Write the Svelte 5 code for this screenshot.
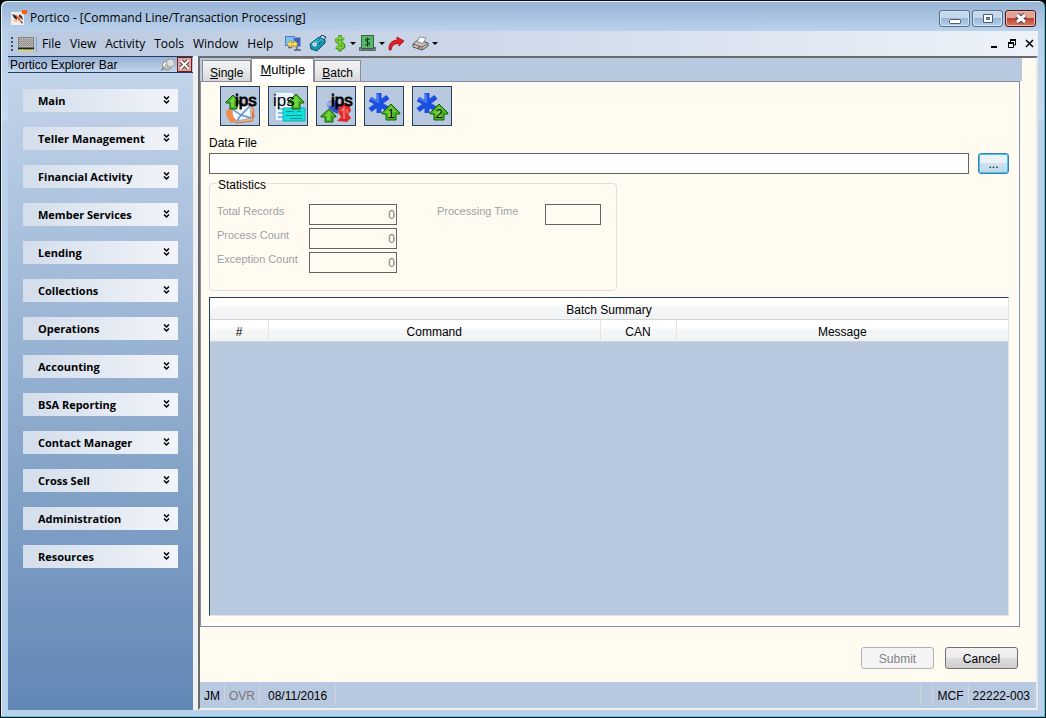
<script lang="ts">
  const menus = ['File', 'View', 'Activity', 'Tools', 'Window', 'Help'];
  const groups = [
    'Main', 'Teller Management', 'Financial Activity', 'Member Services', 'Lending',
    'Collections', 'Operations', 'Accounting', 'BSA Reporting', 'Contact Manager',
    'Cross Sell', 'Administration', 'Resources'
  ];
  const stats = [
    { id: 'total', label: 'Total Records' },
    { id: 'process', label: 'Process Count' },
    { id: 'exception', label: 'Exception Count' }
  ];
  let dataFile = $state('');
</script>

{#snippet arrow(x: number, y: number, digit: string)}
  <g transform="translate({x} {y})">
    <path d="M9 0 L18 9 V10 H14 V16 H4 V10 H0 V9 Z" fill="#45b51f" stroke="#17610c" />
    <path d="M9 2 L14 8 H11 V14 H6 V9 H3 Z" fill="#8be04b" opacity=".65" />
    <text class="digit" x="9" y="14" text-anchor="middle">{digit}</text>
  </g>
{/snippet}

{#snippet star()}
  <path d="M14 6 V26 M5 12 L23 22 M23 10 L5 23" stroke="#1b4fe0" stroke-width="5" />
  <path d="M13 7 V16 M6 11 L13 15" stroke="#4b7df5" stroke-width="2" />
{/snippet}

<div class="window">
  <header class="title">
    <svg width="16" height="16" viewBox="0 0 16 16" aria-hidden="true">
      <path d="M0 2H13V15H0Z" fill="#f1eeec" />
      <path d="M1 4L6 6L6 10L3 8Z" fill="#2b2b30" /><path d="M4 4L8 7L12 13L7 10Z" fill="#ef6a25" />
      <path d="M8 4L11 6L12 10L8 7Z" fill="#3b3b40" /><path d="M2 11L5 9L7 12Z" fill="#f6b08c" /><path d="M9 11L12 12L11 14Z" fill="#5b5b60" />
      <rect x="11" width="5" height="4" fill="#ff5a0a" />
    </svg>
    <h1>Portico - [Command Line/Transaction Processing]</h1>
    <div class="controls">
      <button class="wbtn" aria-label="Minimize"><svg width="12" height="12"><rect x=".5" y="6.500" width="11" height="4" rx="1" fill="#fff" stroke="#4c5d75" /></svg></button>
      <button class="wbtn" aria-label="Maximize"><svg width="12" height="12"><path d="M1.500 1.500H10.500V9.500H1.500Z" fill="#fff" stroke="#4c5d75" /><path d="M4.500 4.500H7.500V6.500H4.500Z" fill="#86a6cc" stroke="#4c5d75" /></svg></button>
      <button class="wbtn close" aria-label="Close"><svg width="12" height="12"><path d="M2 2L10 9M10 2L2 9" stroke="#4a3f4e" stroke-width="5" /><path d="M2 2L10 9M10 2L2 9" stroke="#fff" stroke-width="3" /></svg></button>
    </div>
  </header>

  <nav class="menubar">
    <span class="grip"></span>
    <svg width="17" height="16" viewBox="0 0 17 16" aria-hidden="true">
      <rect x=".5" y="1.500" width="15" height="11" fill="#b5b4b1" stroke="#85847f" />
      <path d="M1 3.500H15M1 5.500H15M1 7.500H15M1 9.500H15" stroke="#8c8b88" stroke-dasharray="1 1" />
      <path d="M2 4.500H15M2 6.500H15M2 8.500H15" stroke="#98979a" stroke-dasharray="1 1" />
      <path d="M0 12.500H16" stroke="#222" stroke-width="2" /><path d="M1 14.500H16" stroke="#e4d833" stroke-width="2" stroke-dasharray="2 1" />
    </svg>
    <span class="bar"></span>
    {#each menus as m}<button class="menu">{m}</button>{/each}
    <div class="tools">
      <button aria-label="Connect">
        <svg width="17" height="17" viewBox="0 0 17 17"><rect x=".5" y="1.500" width="9" height="9" fill="#7cc0f5" stroke="#4a7fc0" /><rect x="8.500" y="2.500" width="7" height="9" fill="#3a60c8" stroke="#8fa3c8" /><path d="M9 15H16M3 12.500H7M12 12V15" stroke="#55607a" stroke-width="1.500" /><path d="M2 9L6 5.500V8H9V5.500L13 9L9 12.500V10.500H6V12.500Z" fill="#ffe24a" stroke="#b8940e" stroke-width=".6" /></svg>
      </button>
      <button aria-label="Calculator">
        <svg width="18" height="17" viewBox="0 0 18 17"><path d="M1 9L10 2L16 5V8L8 16L2 14Z" fill="#1592b4" stroke="#075873" /><path d="M2 9L10 3L15 5L7 12Z" fill="#35bcd4" /><circle cx="5.500" cy="9.500" r="2" fill="#e5fbff" /><circle cx="5.500" cy="9.500" r=".8" fill="#e05a90" /><path d="M9 6L11 4M10 8L13 6M8 10L11 8" stroke="#054a66" /><path d="M11 2L13 0L17 2L15 5" fill="none" stroke="#0a3e58" /></svg>
      </button>
      <button aria-label="Money">
        <svg width="13" height="17" viewBox="0 0 13 17"><path d="M10 4.500Q6 2 3 4.500Q2 7 6 8Q10.500 9 9.500 12Q6 14.500 2 12M6 0V16.500" fill="none" stroke="#4d9524" stroke-width="3.500" /><path d="M10 4Q6 1.500 3 4Q2 7 6 8Q10 9 9 12Q6 14 2 11.500M6 1V15" fill="none" stroke="#7fd63c" stroke-width="1.500" /></svg>
      </button>
      <i class="drop"></i>
      <button aria-label="Cash">
        <svg width="17" height="17" viewBox="0 0 17 17"><rect x="2.500" y=".5" width="12" height="13" fill="#5db46c" stroke="#2b7040" /><path d="M11 4.500Q8.500 3 6.500 4.500Q6.500 6.500 8.500 7Q11 7.500 10.500 9.500Q8.500 11 6 9.500M8.500 2.500V11.500" fill="none" stroke="#063c17" /><path d="M.5 12.500H2.500V14H14.500V12.500H16.500V15.500H.5Z" fill="#8a8d92" stroke="#444" stroke-width=".7" /></svg>
      </button>
      <i class="drop"></i>
      <button aria-label="Forward">
        <svg width="17" height="15" viewBox="0 0 17 15"><path d="M1 14Q0 5 9 4V1L16 5L11 10V7.500Q4 7 3 14Z" fill="#e61d22" stroke="#a20a10" stroke-width=".8" /></svg>
      </button>
      <button aria-label="Print">
        <svg width="17" height="15" viewBox="0 0 17 15"><path d="M1 8L6 4L16 7V10L10 14L1 11Z" fill="#c6c5c0" stroke="#55534e" /><path d="M5 5.500L8 .8L14 2L11 7.500Z" fill="#fff" stroke="#77746f" stroke-width=".8" /><path d="M1 8L10 11L16 7.500M10 11V13" fill="none" stroke="#67645f" /><path d="M6 11.500H8" stroke="#e03030" stroke-width="2" /></svg>
      </button>
      <i class="drop"></i>
    </div>
    <div class="mdi">
      <button aria-label="Minimize document"><svg width="10" height="10"><path d="M2 8H8" stroke="#000" stroke-width="2" /></svg></button>
      <button aria-label="Restore document"><svg width="10" height="10"><path d="M3 1.500H9M3.500 1V4M8.500 1V6H7M1 4.500H7M1.500 4V8.500H6.500V4" fill="none" stroke="#000" /><path d="M3 1H9M1 4H7" stroke="#000" stroke-width="2" /></svg></button>
      <button aria-label="Close document"><svg width="10" height="10"><path d="M1 1L8 8M8 1L1 8" stroke="#000" stroke-width="1.500" /></svg></button>
    </div>
  </nav>

  <div class="client">
    <aside>
      <div class="barhead">
        <h2>Portico Explorer Bar</h2>
        <button class="pin" aria-label="Pin"><svg width="16" height="14" viewBox="0 0 16 14"><path d="M0 13L4 8L7 10Z" fill="#777" /><circle cx="7" cy="7.500" r="4.500" fill="#bdbdbd" stroke="#8e8e8e" /><path d="M7 3L11 9" stroke="#a5a5a5" stroke-width="3" /><circle cx="10.500" cy="5" r="4" fill="#dedede" stroke="#a0a0a0" /><path d="M4 8Q4 5 6 5" stroke="#fff" stroke-width="1.500" fill="none" /></svg></button>
        <button aria-label="Close explorer bar"><svg width="15" height="15" viewBox="0 0 15 15"><rect x=".5" y=".5" width="14" height="14" fill="#dfa39d" stroke="#6d1f22" /><path d="M4 4L11 11M11 4L4 11" stroke="#5b4646" stroke-width="4" /><path d="M3.500 3.500L11.500 11.500M11.500 3.500L3.500 11.500" stroke="#fff" stroke-width="2" /></svg></button>
      </div>
      <ul>
        {#each groups as g}
          <li>
            <button class="group">{g}
              <svg width="7" height="9" viewBox="0 0 7 9"><path d="M1 .5L3.500 3L6 .5M1 4.500L3.500 7L6 4.500" fill="none" stroke="#000" stroke-width="1.500" /></svg>
            </button>
          </li>
        {/each}
      </ul>
    </aside>

    <main>
      <div class="tabarea">
        <div class="tabs" role="tablist">
          <button role="tab" aria-selected="false"><u>S</u>ingle</button>
          <button role="tab" aria-selected="true" class="on"><u>M</u>ultiple</button>
          <button role="tab" aria-selected="false"><u>B</u>atch</button>
        </div>
        <section class="page">
          <div class="actions">
            <button aria-label="IPS post">
              <svg width="38" height="38" viewBox="0 0 38 38">
                <path d="M8 22L14 16L30 17L33 24L31 34L15 36L8 32Z" fill="#f4b184" stroke="#d0703a" />
                <path d="M11 22L16 17L29 19L30 31L16 34L11 30Z" fill="#f2f9ff" stroke="#8fb4dc" />
                <path d="M11 22L20 28L29 19M20 28L16 34M20 28L30 31" stroke="#5f8fc9" fill="none" stroke-width="1.500" />
                <path d="M7 22Q2 27 10 36L15 33Q10 28 12 24Z" fill="#ef8b50" />
                <path d="M31 24L34 29L31 34Z" fill="#e2763c" />
                <path d="M12 8L19 15V16H16V22H9V16H5V15Z" fill="#45b51f" stroke="#17610c" />
                <path d="M12 10L15 14H13V20H10V15H8Z" fill="#8be04b" opacity=".7" />
                <text class="ips" x="14" y="19">ips</text>
              </svg>
            </button>
            <button aria-label="IPS file">
              <svg width="38" height="38" viewBox="0 0 38 38">
                <path d="M6 5H23L27 9V34H6Z" fill="#eaf5ff" stroke="#8fb6df" />
                <path d="M9 22H14M9 26H14M9 30H14" stroke="#90b7df" stroke-width="2" />
                <path d="M14 21H36V34H14Z" fill="#10e0dc" stroke="#0ab5b6" />
                <path d="M17 24.500H25M17 28.500H33M21 31.500H33M28 24.500H32" stroke="#078b91" />
                <path d="M27 7L35 15V16H31V22H23V16H19V15Z" fill="#45b51f" stroke="#17610c" />
                <path d="M27 9L31 14H29V20H25V15H22Z" fill="#8be04b" opacity=".7" />
                <text class="ips light" x="4" y="19">ips</text>
              </svg>
            </button>
            <button aria-label="IPS exchange">
              <svg width="38" height="38" viewBox="0 0 38 38">
                <path d="M11 15L17 12L23 20L21 27L16 25L10 19Z" fill="#3555c4" />
                <path d="M9 16L14 14L16 18L11 20Z" fill="#95a9e8" />
                <path d="M21 25L24 15L32 17L34 24L31 27L34 31L30 35L20 34L24 30Z" fill="#e22a2c" />
                <path d="M24 24L27 21V32M30 22V26" stroke="#ff8177" fill="none" stroke-width="1.500" />
                <path d="M12 22L19 29V30H16V35H8V30H4V29Z" fill="#45b51f" stroke="#17610c" />
                <path d="M12 24L15 28H13V33H10V29H8Z" fill="#8be04b" opacity=".7" />
                <text class="ips" x="14" y="19">ips</text>
              </svg>
            </button>
            <button aria-label="Star 1"><svg width="38" height="38" viewBox="0 0 38 38">{@render star()}{@render arrow(17, 17, '1')}</svg></button>
            <button aria-label="Star 2"><svg width="38" height="38" viewBox="0 0 38 38">{@render star()}{@render arrow(17, 17, '2')}</svg></button>
          </div>

          <label class="filelabel" for="file">Data File</label>
          <div class="filerow">
            <input id="file" type="text" bind:value={dataFile} />
            <button class="browse" aria-label="Browse">...</button>
          </div>

          <fieldset disabled>
            <legend>Statistics</legend>
            <div class="stats">
              <div class="col">
                {#each stats as s}
                  <div class="field"><label for={s.id}>{s.label}</label><input id={s.id} type="text" value="0" /></div>
                {/each}
              </div>
              <div class="field time"><label for="time">Processing Time</label><input id="time" type="text" /></div>
            </div>
          </fieldset>

          <div class="grid">
            <table>
              <colgroup><col class="num" /><col /><col class="can" /><col /></colgroup>
              <thead>
                <tr><th colspan="4">Batch Summary</th></tr>
                <tr><th>#</th><th>Command</th><th>CAN</th><th>Message</th></tr>
              </thead>
              <tbody></tbody>
            </table>
          </div>
        </section>
      </div>

      <div class="buttons">
        <button disabled>Submit</button>
        <button>Cancel</button>
      </div>

      <footer>
        <span>JM</span><span class="off">OVR</span><span class="date">08/11/2016</span>
        <span class="fill"></span><span class="gap"></span><span class="mcf">MCF</span><span>22222-003</span>
      </footer>
    </main>
  </div>
</div>

<style>
  :global(body) { margin: 0; background: #000; }
  * { box-sizing: border-box; }
  button { font: inherit; color: inherit; margin: 0; padding: 0; border: 0; background: none; }
  svg { display: block; flex: none; }
  h1, h2, ul { margin: 0; padding: 0; font-weight: 400; list-style: none; }
  input { font: inherit; min-width: 0; margin: 0; border: 1px solid #646464; border-radius: 0; outline: 0; background: #fff; }

  .window {
    display: flex; flex-direction: column; min-height: 100vh; padding: 0 7px 7px;
    border: 1px solid #111; border-radius: 7px 7px 0 0;
    background: linear-gradient(#98b4d4, #b9d1ec 30px, #c6daf0 118px, #b9d1ea 122px);
    box-shadow: inset -1px -1px #2fd0ea, inset 1px 1px #e6f2fc;
    font: 12px/16px "Liberation Sans", Arial, sans-serif; color: #000;
  }
  .title { display: flex; align-items: center; height: 30px; padding: 4px 0 0 3px; gap: 3px; }
  h1 { flex: 1; font: 12px/16px "Open Sans", "Noto Sans", sans-serif; }
  .controls { display: flex; gap: 2px; align-self: flex-start; padding: 5px 2px 0 0; }
  .wbtn {
    display: grid; place-items: center; width: 31px; height: 17px; border: 1px solid #52708f; border-radius: 3px;
    background: linear-gradient(#c6d8ec 45%, #9bb7d6 50%, #b7d0eb); box-shadow: inset 0 0 0 1px #d5e4f3;
  }
  .close { border-color: #4a1418; background: linear-gradient(#e2a296 45%, #bd4030 50%, #d67e62); box-shadow: inset 0 0 0 1px #eab7ab; }

  .menubar {
    display: flex; align-items: center; height: 25px; padding: 0 3px 0 2px;
    background: linear-gradient(90deg, #b9c9df, #c9d5e7 40%, #edf2f9);
    font: 12px/16px "Open Sans", "Noto Sans", sans-serif;
  }
  .grip { width: 2px; height: 14px; margin: 0 5px 0 1px; background: repeating-linear-gradient(#3a4f77 0 2px, transparent 2px 4px); }
  .bar { width: 1px; height: 16px; margin: 0 0 0 1px; background: #8aa5cc; }
  .menu { padding: 0 4px 0 5px; }
  .tools { display: flex; flex: 1; align-items: center; padding-left: 8px; }
  .tools button { margin-right: 7px; }
  .tools button:has(+ .drop) { margin-right: 3px; }
  .drop { border: 3px solid transparent; border-top-color: #000; border-bottom: 0; margin-right: 3px; }
  .mdi { display: flex; gap: 8px; }

  .client { display: flex; flex: 1; background: #f0f0f0; }
  aside { width: 185px; flex: none; background: linear-gradient(#c5d6eb, #6187b5); }
  .barhead { display: flex; align-items: center; height: 17px; padding: 0 1px 0 2px; border: 1px solid #223e66; border-width: 1px 0; background: linear-gradient(#94b0d4, #c4d6ec); }
  h2 { flex: 1; padding-top: 1px; font: 12px/15px "Liberation Sans", Arial, sans-serif; }
  .pin { margin-right: 1px; }
  ul { display: flex; flex-direction: column; gap: 15px; padding: 16px 15px; }
  .group {
    display: flex; align-items: center; justify-content: space-between; width: 100%; height: 23px; padding: 0 8px 0 15px;
    background: linear-gradient(90deg, #d3deeb, #f2f4f9); font: bold 11px/16px "Open Sans", "Noto Sans", sans-serif;
  }

  main {
    display: flex; flex-direction: column; flex: 1; min-width: 0; margin-left: 5px;
    border: 2px solid #6b6b6b; border-right-color: #e6e6e6; border-bottom-color: #f0f0f0; background: #fffbf0;
  }
  .tabarea { display: flex; flex-direction: column; flex: 1; margin-right: 16px; }
  .tabs { display: flex; align-items: flex-end; height: 23px; margin-right: -2px; padding-left: 2px; background: #b8c8df; }
  .tabs button { height: 21px; padding: 3px 7px 0 7px; border: 1px solid #898c95; border-bottom: 0; background: linear-gradient(#f3f3f3, #e9e9e9 50%, #d8d8d8); }
  .tabs .on { height: 24px; margin-bottom: -1px; padding: 0 8px 2px; font-size: 13px; background: #fff; z-index: 1; }
  .page { display: flex; flex-direction: column; flex: 1; padding: 4px 10px 10px 8px; border: 1px solid #868ba0; box-shadow: inset -2px -3px #fff; }
  .actions { display: flex; gap: 8px; padding-left: 11px; }
  .actions button { border: 1px solid #24405f; background: #b8c8df; width: 40px; height: 40px; }
  .ips { font: 17px "Liberation Sans", Arial, sans-serif; stroke: #000; stroke-width: .8px; }
  .light { stroke-width: 0; }
  .digit { font: 13px "Liberation Sans", Arial, sans-serif; }
  .filelabel { margin-top: 9px; }
  .filerow { display: flex; gap: 9px; margin-top: 2px; }
  .filerow input { flex: 1; height: 21px; padding: 0 3px; }
  .browse {
    width: 31px; height: 21px; border: 1px solid #3c7fb1; border-radius: 3px; line-height: 18px;
    background: linear-gradient(#eaf2f8 45%, #cfe2ee 50%, #bcd7e6); box-shadow: inset 0 0 0 1px #3fc6f2;
  }
  fieldset { width: 408px; max-width: 100%; height: 117px; min-width: 0; margin: 0 0 6px; padding: 0 7px; border: 1px solid #d5dfe5; border-radius: 4px; }
  legend { padding: 4px 2px 0 1px; line-height: 15px; }
  .stats { display: flex; align-items: flex-start; justify-content: space-between; padding: 11px 8px 0 0; }
  .col { display: flex; flex-direction: column; gap: 3px; }
  .field { display: flex; align-items: flex-start; }
  .field label { width: 92px; font-size: 11px; line-height: 15px; color: #a0a09e; text-shadow: 1px 1px #fff; }
  .field input { width: 88px; height: 21px; padding: 1px 1px 0; text-align: right; color: #777; background: transparent; }
  .time label { width: 108px; }
  .time input { width: 56px; }

  .grid { flex: 1; border: 1px solid #24405f; border-right-color: #dfe5ee; border-bottom-color: #dfe5ee; background: #b8c8df; }
  table { width: 100%; table-layout: fixed; border-collapse: separate; border-spacing: 0; }
  .num { width: 59px; }
  .can { width: 76px; }
  th {
    height: 22px; padding: 2px 0 0; font-weight: 400; line-height: 16px; border-bottom: 1px solid #d5d5d5; border-right: 1px solid #e2e4e8;
    background: linear-gradient(#fff 40%, #f6f7f9 42%, #eff1f3);
  }
  th:last-child { border-right: 0; }

  .buttons { display: flex; justify-content: flex-end; gap: 11px; padding: 20px 18px 13px; }
  .buttons button { width: 73px; height: 22px; padding-top: 2px; border: 1px solid #707070; border-radius: 3px; background: linear-gradient(#f2f2f2, #ebebeb 48%, #dddddd 50%, #cfcfcf); }
  .buttons button:disabled { border-color: #adb2b5; color: #838383; background: #f4f4f4; }

  footer { display: flex; height: 26px; padding: 3px 1px 2px 0; background: #b8c8df; line-height: 21px; }
  footer span { padding: 1px 4px 0; border-right: 1px solid #cfd5dc; }
  footer .date { padding: 1px 8px 0; }
  footer .off { color: #777; }
  footer .fill { flex: 1; }
  footer .gap { width: 12px; }
  footer .mcf { padding-left: 5px; }
</style>
